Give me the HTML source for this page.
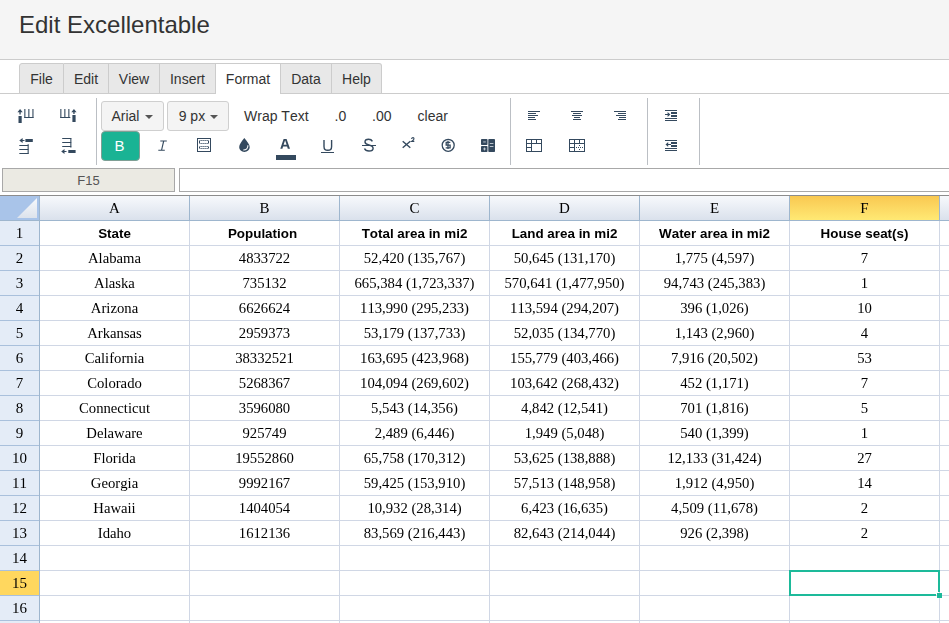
<!DOCTYPE html>
<html><head><meta charset="utf-8">
<style>
*{box-sizing:border-box;margin:0;padding:0}
html,body{width:949px;height:623px;overflow:hidden;background:#fff;font-family:"Liberation Sans",sans-serif;position:relative;font-kerning:none}
.abs{position:absolute}
#hdr{left:0;top:0;width:949px;height:60px;background:#f5f5f5;border-bottom:1px solid #cccccc}
#title{left:19px;top:10px;font-size:24px;color:#333;line-height:30px;white-space:nowrap}
.tab{top:63px;height:31px;background:#e8e8e8;border:1px solid #cccccc;border-left:none;font-size:14px;color:#333;line-height:30px;text-align:center;white-space:nowrap}
#tabline{left:0;top:93px;width:949px;height:1px;background:#cccccc}
.sep{width:1px;background:#bbbfc4;top:98px;height:67px}
#tbline{left:0;top:167px;width:949px;height:1px;background:#d0d0d0}
.btxt{font-size:14px;color:#333;line-height:16px;white-space:nowrap}
.dd{top:101px;height:30px;background:#f4f4f4;border:1px solid #cfcfcf;border-radius:3px}
#namebox{left:2px;top:168px;width:173px;height:24px;background:#ebeae3;border:1px solid #a8a8a8;font-size:13px;color:#555;text-align:center;line-height:23px}
#fbox{left:179px;top:168px;width:780px;height:24px;background:#fff;border:1px solid #a8a8a8}
#gridtop{left:0;top:195px;width:949px;height:1px;background:#8c8c8c}
svg{position:absolute;overflow:visible}
.ser{font-family:"Liberation Serif",serif}
.hdrg{background:linear-gradient(#f7f9fc,#dae1ec)}
.selh{background:linear-gradient(#f9c851,#ffe974)}
.selr{background:#ffd75e}
.hl{left:40px;width:909px;height:1px;background:#d0d7e5}
.vl{top:221px;width:1px;height:402px;background:#d0d7e5}
.hvl{top:196px;width:1px;height:24px;background:#9eb6ce}
.colh{top:196px;height:24px;line-height:24px;text-align:center;font-family:"Liberation Serif",serif;font-size:15px;color:#000}
.rowh{left:0;width:39px;height:24px;line-height:24px;text-align:center;font-family:"Liberation Serif",serif;font-size:15px;color:#000}
.cs{width:149px;height:24px;line-height:24px;text-align:center;font-family:"Liberation Serif",serif;font-size:14.7px;color:#000;white-space:nowrap}
.cb{width:149px;height:24px;line-height:24px;text-align:center;font-family:"Liberation Sans",sans-serif;font-weight:bold;font-size:13.4px;color:#000;white-space:nowrap;padding-top:1px}
</style></head><body>
<div id="hdr" class="abs"></div>
<div id="title" class="abs">Edit Excellentable</div>

<div id="tabline" class="abs"></div>
<div class="tab abs" style="left:19px;width:45px;border-left:1px solid #ccc;border-top-left-radius:3px">File</div>
<div class="tab abs" style="left:64px;width:45px">Edit</div>
<div class="tab abs" style="left:109px;width:51px">View</div>
<div class="tab abs" style="left:160px;width:56px">Insert</div>
<div class="tab abs" style="left:216px;width:65px;background:#fff;border-bottom:none;height:31px">Format</div>
<div class="tab abs" style="left:281px;width:51px">Data</div>
<div class="tab abs" style="left:332px;width:50px;border-top-right-radius:3px">Help</div>

<!-- toolbar -->
<div class="sep abs" style="left:96px"></div>
<div class="sep abs" style="left:510px"></div>
<div class="sep abs" style="left:647px"></div>
<div class="sep abs" style="left:699px"></div>

<div class="dd abs" style="left:101px;width:63px"></div>
<div class="btxt abs" style="left:111.4px;top:108px;color:#333">Arial</div>
<svg style="left:145px;top:115px" width="8" height="4"><path d="M0 0H8L4 4Z" fill="#555"/></svg>
<div class="dd abs" style="left:167px;width:62px"></div>
<div class="btxt abs" style="left:178.7px;top:108px;color:#333">9 px</div>
<svg style="left:210.3px;top:115px" width="8" height="4"><path d="M0 0H8L4 4Z" fill="#555"/></svg>

<div class="btxt abs" style="left:244px;top:108px">Wrap Text</div>
<div class="btxt abs" style="left:334.5px;top:108px">.0</div>
<div class="btxt abs" style="left:372px;top:108px">.00</div>
<div class="btxt abs" style="left:417.6px;top:108px">clear</div>

<div class="abs" style="left:101px;top:131px;width:39px;height:30px;background:#1ab394;border:1px solid #7f9f95;border-radius:4px;color:#fff;font-size:15px;text-align:center;line-height:27px;padding-right:2px">B</div>

<!--ICONS-->
<svg style="left:0;top:0" width="949" height="170" viewBox="0 0 949 170">
<g fill="#34495e" shape-rendering="crispEdges">
<!-- insert col left -->
</g><g fill="#34495e">
<rect x="18.5" y="116" width="3.2" height="7"/>
<rect x="19.4" y="111.5" width="1.3" height="3"/>
<rect x="24.3" y="109" width="1.1" height="9"/>
<rect x="28.3" y="109" width="1.1" height="9"/>
<rect x="32.4" y="109" width="1.1" height="9"/>
<rect x="24.3" y="117" width="9.2" height="1"/>
<!-- insert col right -->
<rect x="72.4" y="115" width="3.2" height="7"/>
<rect x="73.3" y="111.5" width="1.3" height="2.5"/>
<rect x="60.3" y="109" width="1.1" height="9"/>
<rect x="64.3" y="109" width="1.1" height="9"/>
<rect x="68.3" y="109" width="1.1" height="9"/>
<rect x="60.3" y="117" width="10" height="1"/>
<!-- row icon 3 -->
<rect x="25.4" y="139" width="7.4" height="3"/>
<rect x="21" y="140" width="3.5" height="1"/>
<rect x="19.3" y="145" width="9" height="1"/>
<rect x="19.3" y="149" width="9" height="1"/>
<rect x="19.3" y="153" width="9.3" height="1"/>
<rect x="27.6" y="144.2" width="1.1" height="9.6"/>
<!-- row icon 4 -->
<rect x="62.2" y="138" width="9" height="1"/>
<rect x="62.2" y="142" width="9" height="1"/>
<rect x="62.2" y="146" width="9" height="1"/>
<rect x="70.3" y="138" width="1.1" height="9.6"/>
<rect x="68.3" y="150" width="7.3" height="3"/>
<rect x="63" y="151" width="3.5" height="1"/>
</g><g fill="#34495e" shape-rendering="crispEdges">
<!-- A color bar -->
<rect x="276" y="155" width="20" height="5"/>
<!-- underline -->
<rect x="321" y="152" width="13" height="1"/>
<!-- strike -->
<rect x="362" y="145" width="14" height="1"/>
<!-- align left -->
<rect x="528" y="111" width="12" height="1"/>
<rect x="528" y="113" width="8" height="1"/>
<rect x="528" y="115" width="10" height="1"/>
<rect x="528" y="117" width="7" height="1"/>
<rect x="528" y="119" width="8" height="1"/>
<!-- align center -->
<rect x="571" y="111" width="12" height="1"/>
<rect x="573" y="113" width="8" height="1"/>
<rect x="572" y="115" width="10" height="1"/>
<rect x="574" y="117" width="6" height="1"/>
<rect x="573" y="119" width="8" height="1"/>
<!-- align right -->
<rect x="614" y="111" width="12" height="1"/>
<rect x="618" y="113" width="8" height="1"/>
<rect x="616" y="115" width="10" height="1"/>
<rect x="619" y="117" width="7" height="1"/>
<rect x="618" y="119" width="8" height="1"/>
<!-- indent -->
<rect x="665" y="110" width="12" height="1"/>
<rect x="671" y="112" width="6" height="2"/>
<rect x="671" y="115" width="6" height="2"/>
<rect x="665" y="114" width="3" height="1"/>
<rect x="665" y="118" width="12" height="1"/>
<rect x="665" y="120" width="12" height="1"/>
<!-- outdent -->
<rect x="665" y="140" width="12" height="1"/>
<rect x="671" y="142" width="6" height="2"/>
<rect x="671" y="145" width="6" height="2"/>
<rect x="668" y="144" width="3" height="1"/>
<rect x="665" y="148" width="12" height="1"/>
<rect x="665" y="150" width="12" height="1"/>
</g>
<g fill="#34495e">
<path d="M17.4 112.2L20.05 109L22.7 112.2Z"/>
<path d="M71.3 112.2L73.95 109L76.6 112.2Z"/>
<path d="M19.3 140.5L22.6 138V143Z"/>
<path d="M61.2 151.5L64.5 149V154Z"/>
<path d="M667.6 112L670.4 114.5L667.6 117Z"/>
<path d="M665.5 144.5L668.2 142V147Z"/>
</g>
<!-- italic I -->
<g stroke="#34495e" fill="none" stroke-width="1.1">
<path d="M160.3 141H166.8M158.3 150.3H164.8M163.7 141L161.5 150.3"/>
</g>
<!-- border icon -->
<g fill="none" stroke="#34495e" stroke-width="1" shape-rendering="crispEdges">
<rect x="197.5" y="138.5" width="13" height="13"/>
</g>
<g fill="#34495e"><rect x="199" y="140.5" width="1" height="3"/><rect x="208" y="140.5" width="1" height="3"/><rect x="200.5" y="140" width="1.2" height="1"/><rect x="200.5" y="143" width="1.2" height="1"/><rect x="202.5" y="140" width="1.2" height="1"/><rect x="202.5" y="143" width="1.2" height="1"/><rect x="204.5" y="140" width="1.2" height="1"/><rect x="204.5" y="143" width="1.2" height="1"/><rect x="206.5" y="140" width="1.2" height="1"/><rect x="206.5" y="143" width="1.2" height="1"/><rect x="199" y="146.5" width="1" height="2"/><rect x="208" y="146.5" width="1" height="2"/><rect x="200.5" y="146" width="1.2" height="1"/><rect x="200.5" y="148" width="1.2" height="1"/><rect x="202.5" y="146" width="1.2" height="1"/><rect x="202.5" y="148" width="1.2" height="1"/><rect x="204.5" y="146" width="1.2" height="1"/><rect x="204.5" y="148" width="1.2" height="1"/><rect x="206.5" y="146" width="1.2" height="1"/><rect x="206.5" y="148" width="1.2" height="1"/></g>
<!-- drop -->
<path d="M244.3 138C241.5 141.5 239.2 144.5 239.2 147.1C239.2 150 241.5 152 244.4 152C247.3 152 249.7 150 249.7 147.1C249.7 144.5 247.2 141.5 244.3 138Z" fill="#34495e"/>
<path d="M247.9 145.3C248.1 148.3 246.3 150 243.3 150" stroke="#fff" stroke-width="1.1" fill="none"/>
<!-- A -->
<path d="M280.3 148.8L283.6 139H286.6L290 148.8H287.8L287.1 146.6H283.1L282.4 148.8ZM283.6 144.8H286.6L285.1 140.3Z" fill="#34495e"/>
<!-- U -->
<path d="M324 140V146.4C324 149 325.6 150.3 327.8 150.3C330 150.3 331.6 149 331.6 146.4V140" stroke="#34495e" stroke-width="1.4" fill="none"/>
<!-- S -->
<path d="M372.4 141.3C371.7 140 370.4 139.3 368.6 139.3C366.4 139.3 365 140.4 365 142C365 146 373.1 144 373.1 148.2C373.1 150 371.4 151 369 151C366.8 151 365.1 150.1 364.5 148.5" stroke="#34495e" stroke-width="1.45" fill="none"/>
<!-- x2 -->
<path d="M402.7 141.2L410.3 147.8M410.3 141.2L402.7 147.8" stroke="#34495e" stroke-width="1.4" fill="none"/>
<path d="M411.5 139C411.7 138.1 412.3 137.6 413 137.6C413.7 137.6 414 138.1 414 138.7C414 139.6 412.9 140.3 411.6 141.4H414.3" stroke="#34495e" stroke-width="1.1" fill="none"/>
<!-- dollar -->
<circle cx="448.2" cy="145.3" r="6" stroke="#34495e" stroke-width="1.3" fill="none"/>
<path d="M450.3 142.4H446.2V145.2H450.1V147.8H445.7M448 140.8V149" stroke="#34495e" stroke-width="1.3" fill="none"/>
<!-- calc -->
<rect x="481" y="139" width="6.5" height="6" rx="0.8" fill="#34495e"/>
<rect x="481" y="146" width="6.5" height="6" rx="0.8" fill="#34495e"/>
<rect x="488.3" y="139" width="6.7" height="13" rx="0.8" fill="#34495e"/>
<rect x="483.2" y="141.5" width="2.6" height="0.9" fill="#c9d1d9"/>
<rect x="483.2" y="148.5" width="2.6" height="0.9" fill="#c9d1d9"/>
<rect x="484" y="147.6" width="0.9" height="2.8" fill="#c9d1d9"/>
<rect x="489.8" y="143" width="3.6" height="0.9" fill="#c9d1d9"/>
<rect x="489.8" y="146.1" width="3.6" height="0.9" fill="#c9d1d9"/>
<!-- merge -->
<g fill="none" stroke="#34495e" stroke-width="1" shape-rendering="crispEdges">
<rect x="526.5" y="139.5" width="15" height="12"/>
<path d="M526 143.5H542M526 147.5H531.5M531.5 139V152M536.5 139V143.5"/>
<rect x="569.5" y="139.5" width="15" height="12"/>
<path d="M569 143.5H585M569 147.5H574.5M574.5 139V152M579.5 139V143.5"/>
</g>
<g fill="#34495e">
<rect x="576" y="147" width="1" height="1"/><rect x="578" y="147" width="1" height="1"/><rect x="580" y="147" width="1" height="1"/><rect x="582" y="147" width="1" height="1"/>
<rect x="579" y="145" width="1" height="1"/><rect x="579" y="149" width="1" height="1"/>
</g>
</svg>

<!--/ICONS-->
<div id="namebox" class="abs">F15</div>
<div id="fbox" class="abs"></div>
<!--GRID-->
<div class="abs" style="left:0;top:0;width:949px;height:623px;will-change:transform">
<div class="abs hdrg" style="left:40px;top:196px;width:909px;height:24px"></div>
<div class="abs selh" style="left:790px;top:196px;width:149px;height:24px"></div>
<div class="abs" style="left:0;top:221px;width:39px;height:402px;background:#e4ecf7"></div>
<div class="abs selr" style="left:0;top:571px;width:39px;height:24px"></div>
<div class="abs" style="left:0;top:196px;width:39px;height:24px;background:#a9c4e9"></div>
<svg style="left:0;top:196px" width="39" height="24"><defs><linearGradient id="tg" x1="0" y1="0" x2="0" y2="1"><stop offset="0" stop-color="#f7f9fc"/><stop offset="1" stop-color="#dde3ec"/></linearGradient></defs><path d="M17 22H37V2Z" fill="url(#tg)"/></svg>
<div class="abs hl" style="top:245px"></div>
<div class="abs hl" style="top:270px"></div>
<div class="abs hl" style="top:295px"></div>
<div class="abs hl" style="top:320px"></div>
<div class="abs hl" style="top:345px"></div>
<div class="abs hl" style="top:370px"></div>
<div class="abs hl" style="top:395px"></div>
<div class="abs hl" style="top:420px"></div>
<div class="abs hl" style="top:445px"></div>
<div class="abs hl" style="top:470px"></div>
<div class="abs hl" style="top:495px"></div>
<div class="abs hl" style="top:520px"></div>
<div class="abs hl" style="top:545px"></div>
<div class="abs hl" style="top:570px"></div>
<div class="abs hl" style="top:595px"></div>
<div class="abs hl" style="top:620px"></div>
<div class="abs" style="left:0;top:220px;width:39px;height:1px;background:#a9c0dc"></div>
<div class="abs" style="left:0;top:245px;width:39px;height:1px;background:#a9c0dc"></div>
<div class="abs" style="left:0;top:270px;width:39px;height:1px;background:#a9c0dc"></div>
<div class="abs" style="left:0;top:295px;width:39px;height:1px;background:#a9c0dc"></div>
<div class="abs" style="left:0;top:320px;width:39px;height:1px;background:#a9c0dc"></div>
<div class="abs" style="left:0;top:345px;width:39px;height:1px;background:#a9c0dc"></div>
<div class="abs" style="left:0;top:370px;width:39px;height:1px;background:#a9c0dc"></div>
<div class="abs" style="left:0;top:395px;width:39px;height:1px;background:#a9c0dc"></div>
<div class="abs" style="left:0;top:420px;width:39px;height:1px;background:#a9c0dc"></div>
<div class="abs" style="left:0;top:445px;width:39px;height:1px;background:#a9c0dc"></div>
<div class="abs" style="left:0;top:470px;width:39px;height:1px;background:#a9c0dc"></div>
<div class="abs" style="left:0;top:495px;width:39px;height:1px;background:#a9c0dc"></div>
<div class="abs" style="left:0;top:520px;width:39px;height:1px;background:#a9c0dc"></div>
<div class="abs" style="left:0;top:545px;width:39px;height:1px;background:#a9c0dc"></div>
<div class="abs" style="left:0;top:570px;width:39px;height:1px;background:#a9c0dc"></div>
<div class="abs" style="left:0;top:595px;width:39px;height:1px;background:#a9c0dc"></div>
<div class="abs" style="left:0;top:620px;width:39px;height:1px;background:#a9c0dc"></div>
<div class="abs vl" style="left:189px"></div>
<div class="abs vl" style="left:339px"></div>
<div class="abs vl" style="left:489px"></div>
<div class="abs vl" style="left:639px"></div>
<div class="abs vl" style="left:789px"></div>
<div class="abs vl" style="left:939px"></div>
<div class="abs vl" style="left:1089px"></div>
<div class="abs hvl" style="left:189px"></div>
<div class="abs hvl" style="left:339px"></div>
<div class="abs hvl" style="left:489px"></div>
<div class="abs hvl" style="left:639px"></div>
<div class="abs hvl" style="left:789px"></div>
<div class="abs hvl" style="left:939px"></div>
<div class="abs hvl" style="left:1089px"></div>
<div class="abs" style="left:0;top:220px;width:949px;height:1px;background:#9eb6ce"></div>
<div class="abs" style="left:39px;top:196px;width:1px;height:427px;background:#9eb6ce"></div>
<div class="abs colh" style="left:40px;width:149px">A</div>
<div class="abs colh" style="left:190px;width:149px">B</div>
<div class="abs colh" style="left:340px;width:149px">C</div>
<div class="abs colh" style="left:490px;width:149px">D</div>
<div class="abs colh" style="left:640px;width:149px">E</div>
<div class="abs colh" style="left:790px;width:149px">F</div>
<div class="abs colh" style="left:940px;width:149px">G</div>
<div class="abs rowh" style="top:221px">1</div>
<div class="abs rowh" style="top:246px">2</div>
<div class="abs rowh" style="top:271px">3</div>
<div class="abs rowh" style="top:296px">4</div>
<div class="abs rowh" style="top:321px">5</div>
<div class="abs rowh" style="top:346px">6</div>
<div class="abs rowh" style="top:371px">7</div>
<div class="abs rowh" style="top:396px">8</div>
<div class="abs rowh" style="top:421px">9</div>
<div class="abs rowh" style="top:446px">10</div>
<div class="abs rowh" style="top:471px">11</div>
<div class="abs rowh" style="top:496px">12</div>
<div class="abs rowh" style="top:521px">13</div>
<div class="abs rowh" style="top:546px">14</div>
<div class="abs rowh" style="top:571px">15</div>
<div class="abs rowh" style="top:596px">16</div>
<div class="abs cb" style="left:40px;top:221px">State</div>
<div class="abs cb" style="left:190px;top:221px;padding-right:4px">Population</div>
<div class="abs cb" style="left:340px;top:221px">Total area in mi2</div>
<div class="abs cb" style="left:490px;top:221px">Land area in mi2</div>
<div class="abs cb" style="left:640px;top:221px">Water area in mi2</div>
<div class="abs cb" style="left:790px;top:221px">House seat(s)</div>
<div class="abs cs" style="left:40px;top:246px">Alabama</div>
<div class="abs cs" style="left:190px;top:246px">4833722</div>
<div class="abs cs" style="left:340px;top:246px">52,420 (135,767)</div>
<div class="abs cs" style="left:490px;top:246px">50,645 (131,170)</div>
<div class="abs cs" style="left:640px;top:246px">1,775 (4,597)</div>
<div class="abs cs" style="left:790px;top:246px">7</div>
<div class="abs cs" style="left:40px;top:271px">Alaska</div>
<div class="abs cs" style="left:190px;top:271px">735132</div>
<div class="abs cs" style="left:340px;top:271px">665,384 (1,723,337)</div>
<div class="abs cs" style="left:490px;top:271px">570,641 (1,477,950)</div>
<div class="abs cs" style="left:640px;top:271px">94,743 (245,383)</div>
<div class="abs cs" style="left:790px;top:271px">1</div>
<div class="abs cs" style="left:40px;top:296px">Arizona</div>
<div class="abs cs" style="left:190px;top:296px">6626624</div>
<div class="abs cs" style="left:340px;top:296px">113,990 (295,233)</div>
<div class="abs cs" style="left:490px;top:296px">113,594 (294,207)</div>
<div class="abs cs" style="left:640px;top:296px">396 (1,026)</div>
<div class="abs cs" style="left:790px;top:296px">10</div>
<div class="abs cs" style="left:40px;top:321px">Arkansas</div>
<div class="abs cs" style="left:190px;top:321px">2959373</div>
<div class="abs cs" style="left:340px;top:321px">53,179 (137,733)</div>
<div class="abs cs" style="left:490px;top:321px">52,035 (134,770)</div>
<div class="abs cs" style="left:640px;top:321px">1,143 (2,960)</div>
<div class="abs cs" style="left:790px;top:321px">4</div>
<div class="abs cs" style="left:40px;top:346px">California</div>
<div class="abs cs" style="left:190px;top:346px">38332521</div>
<div class="abs cs" style="left:340px;top:346px">163,695 (423,968)</div>
<div class="abs cs" style="left:490px;top:346px">155,779 (403,466)</div>
<div class="abs cs" style="left:640px;top:346px">7,916 (20,502)</div>
<div class="abs cs" style="left:790px;top:346px">53</div>
<div class="abs cs" style="left:40px;top:371px">Colorado</div>
<div class="abs cs" style="left:190px;top:371px">5268367</div>
<div class="abs cs" style="left:340px;top:371px">104,094 (269,602)</div>
<div class="abs cs" style="left:490px;top:371px">103,642 (268,432)</div>
<div class="abs cs" style="left:640px;top:371px">452 (1,171)</div>
<div class="abs cs" style="left:790px;top:371px">7</div>
<div class="abs cs" style="left:40px;top:396px">Connecticut</div>
<div class="abs cs" style="left:190px;top:396px">3596080</div>
<div class="abs cs" style="left:340px;top:396px">5,543 (14,356)</div>
<div class="abs cs" style="left:490px;top:396px">4,842 (12,541)</div>
<div class="abs cs" style="left:640px;top:396px">701 (1,816)</div>
<div class="abs cs" style="left:790px;top:396px">5</div>
<div class="abs cs" style="left:40px;top:421px">Delaware</div>
<div class="abs cs" style="left:190px;top:421px">925749</div>
<div class="abs cs" style="left:340px;top:421px">2,489 (6,446)</div>
<div class="abs cs" style="left:490px;top:421px">1,949 (5,048)</div>
<div class="abs cs" style="left:640px;top:421px">540 (1,399)</div>
<div class="abs cs" style="left:790px;top:421px">1</div>
<div class="abs cs" style="left:40px;top:446px">Florida</div>
<div class="abs cs" style="left:190px;top:446px">19552860</div>
<div class="abs cs" style="left:340px;top:446px">65,758 (170,312)</div>
<div class="abs cs" style="left:490px;top:446px">53,625 (138,888)</div>
<div class="abs cs" style="left:640px;top:446px">12,133 (31,424)</div>
<div class="abs cs" style="left:790px;top:446px">27</div>
<div class="abs cs" style="left:40px;top:471px">Georgia</div>
<div class="abs cs" style="left:190px;top:471px">9992167</div>
<div class="abs cs" style="left:340px;top:471px">59,425 (153,910)</div>
<div class="abs cs" style="left:490px;top:471px">57,513 (148,958)</div>
<div class="abs cs" style="left:640px;top:471px">1,912 (4,950)</div>
<div class="abs cs" style="left:790px;top:471px">14</div>
<div class="abs cs" style="left:40px;top:496px">Hawaii</div>
<div class="abs cs" style="left:190px;top:496px">1404054</div>
<div class="abs cs" style="left:340px;top:496px">10,932 (28,314)</div>
<div class="abs cs" style="left:490px;top:496px">6,423 (16,635)</div>
<div class="abs cs" style="left:640px;top:496px">4,509 (11,678)</div>
<div class="abs cs" style="left:790px;top:496px">2</div>
<div class="abs cs" style="left:40px;top:521px">Idaho</div>
<div class="abs cs" style="left:190px;top:521px">1612136</div>
<div class="abs cs" style="left:340px;top:521px">83,569 (216,443)</div>
<div class="abs cs" style="left:490px;top:521px">82,643 (214,044)</div>
<div class="abs cs" style="left:640px;top:521px">926 (2,398)</div>
<div class="abs cs" style="left:790px;top:521px">2</div>
<div class="abs" style="left:789px;top:570px;width:151px;height:2px;background:#1dba9a"></div>
<div class="abs" style="left:789px;top:570px;width:2px;height:26px;background:#1dba9a"></div>
<div class="abs" style="left:789px;top:594px;width:147px;height:2px;background:#1dba9a"></div>
<div class="abs" style="left:938px;top:570px;width:2px;height:22px;background:#1dba9a"></div>
<div class="abs" style="left:937px;top:593px;width:5px;height:5px;background:#1dba9a"></div>
</div>
<!--/GRID-->
<div id="gridtop" class="abs"></div>

</body></html>
